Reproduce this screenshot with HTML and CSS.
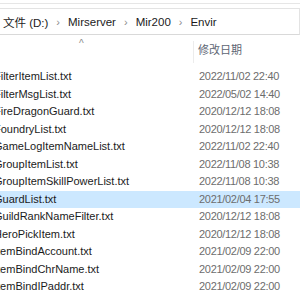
FILE: index.html
```
<!DOCTYPE html>
<html lang="zh-CN">

<head>
  <meta charset="UTF-8" />
  <title>Envir</title>
  <link rel="stylesheet" href="styles.css">
</head>

<body>
  <div class="toolbar"></div>

  <!-- address bar -->
  <div class="address">
    <span>文件 (D:)</span>
    <span class="sep">›</span>
    <span>Mirserver</span>
    <span class="sep">›</span>
    <span>Mir200</span>
    <span class="sep">›</span>
    <span>Envir</span>
  </div>

  <!-- column header -->
  <div class="head">
    <div class="head-name"><span class="caret">^</span></div>
    <div class="head-date">修改日期</div>
  </div>

  <div class="list">
    <div class="row"><span class="name">FilterItemList.txt</span><span class="date">2022/11/02 22:40</span></div>
    <div class="row"><span class="name">FilterMsgList.txt</span><span class="date">2022/05/02 14:40</span></div>
    <div class="row"><span class="name">FireDragonGuard.txt</span><span class="date">2020/12/12 18:08</span></div>
    <div class="row"><span class="name">FoundryList.txt</span><span class="date">2020/12/12 18:08</span></div>
    <div class="row"><span class="name">GameLogItemNameList.txt</span><span class="date">2022/11/02 22:40</span></div>
    <div class="row"><span class="name">GroupItemList.txt</span><span class="date">2022/11/08 10:38</span></div>
    <div class="row"><span class="name">GroupItemSkillPowerList.txt</span><span class="date">2022/11/08 10:38</span></div>
    <div class="row selected"><span class="name">GuardList.txt</span><span class="date">2021/02/04 17:55</span></div>
    <div class="row"><span class="name">GuildRankNameFilter.txt</span><span class="date">2020/12/12 18:08</span></div>
    <div class="row"><span class="name">HeroPickItem.txt</span><span class="date">2020/12/12 18:08</span></div>
    <div class="row"><span class="name">ItemBindAccount.txt</span><span class="date">2021/02/09 22:00</span></div>
    <div class="row"><span class="name">ItemBindChrName.txt</span><span class="date">2021/02/09 22:00</span></div>
    <div class="row"><span class="name">ItemBindIPaddr.txt</span><span class="date">2021/02/09 22:00</span></div>
  </div>
</body>

</html>
```

FILE: styles.css
```
body {
  margin: 0;
  padding: 0;
  width: 300px;
  height: 300px;
  overflow: hidden;
  background-color: white;
  font-family: "Liberation Sans", "Noto Sans CJK SC", sans-serif;
  font-size: 11px;
  color: #1b1b1b;
}

.toolbar {
  height: 3px;
  border-bottom: 1px solid #e6e6e6;
}

.address {
  margin-top: 4px;
  height: 25px;
  border-top: 1px solid #e3e3e3;
  border-bottom: 1px solid #d9d9d9;
  border-right: 1px solid #e3e3e3;
  display: flex;
  align-items: center;
  gap: 8px;
  padding-left: 3px;
  white-space: nowrap;
  font-size: 11.5px;
}

.address .sep {
  color: #8c8c8c;
  font-size: 11px;
}

.head {
  display: grid;
  grid-template-columns: 193px 1fr;
  height: 33px;
}

.head-name {
  position: relative;
}

.caret {
  position: absolute;
  left: 79px;
  top: 3px;
  color: #8a8a8a;
  font-size: 10px;
}

.head-date {
  margin-top: 6px;
  height: 22px;
  border-left: 1px solid #ececec;
  padding-left: 4px;
  line-height: 19px;
  color: #5d6673;
}

.row {
  display: grid;
  grid-template-columns: 199px 1fr;
  height: 17.5px;
  line-height: 17.5px;
  white-space: nowrap;
}

.row.selected {
  background-color: #cce8ff;
}

.name {
  margin-left: -6px;
}

.date {
  color: #6d6d6d;
  letter-spacing: -0.3px;
}
```
